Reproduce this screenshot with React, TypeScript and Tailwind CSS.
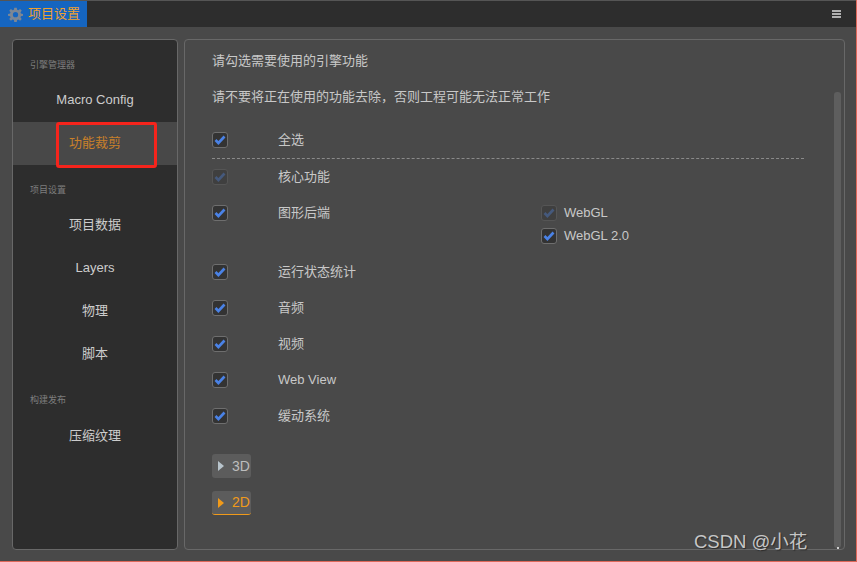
import React from "react";

const font = { fontFamily: '"Liberation Sans", "Noto Sans CJK SC", sans-serif' };

function Check({ dim = false }: { dim?: boolean }) {
  return (
    <span className={`flex h-[16px] w-[16px] shrink-0 items-center justify-center rounded-[3px] border ${dim ? "border-[#555555] bg-[#3f3f3f]" : "border-[#6e6e6e] bg-[#333333]"}`}>
      <svg width="12" height="10" viewBox="0 0 12 10" fill="none">
        <path d="M1.500 5 L4.400 8 L10.500 1.500" stroke={dim ? "#45597c" : "#4a82e6"} strokeWidth="2.600" />
      </svg>
    </span>
  );
}

function Row({ label, dim }: { label: string; dim?: boolean }) {
  return (
    <div className="flex h-[18px] items-center">
      <Check dim={dim} />
      <span className="ml-[50px] w-[263px] text-[13px] text-[#c8c8c8]">{label}</span>
    </div>
  );
}

function NavItem({ label, active }: { label: string; active?: boolean }) {
  return (
    <div className={`flex h-[43px] items-center justify-center text-[13px] ${active ? "bg-[#484848] pb-[2px] text-[#c9802a]" : "pt-[1px] text-[#cccccc]"}`}>
      {label}
    </div>
  );
}

function Head({ label }: { label: string }) {
  return <div className="flex h-[38px] items-end pb-[8px] pl-[17px] text-[9px] leading-[10px] text-[#7e7e7e]">{label}</div>;
}

function Fold({ label, on }: { label: string; on?: boolean }) {
  return (
    <div className={`flex h-[24px] w-[39px] items-center gap-[8px] rounded-[3px] bg-[#5c5c5c] pl-[6px] text-[14px] ${on ? "border-b border-[#f09a1a] text-[#f09a1a]" : "text-[#bdbdbd]"}`}>
      <svg width="6" height="10" viewBox="0 0 6 10" className="shrink-0"><path d="M0 0 L6 5 L0 10 Z" fill={on ? "#f09a1a" : "#b8c4cc"} /></svg>
      <span>{label}</span>
    </div>
  );
}

export default function App() {
  return (
    <div style={font} className="relative flex h-[562px] w-[857px] flex-col overflow-hidden border-r border-b border-[#e0685a] bg-[#494949]">
      <div className="flex h-[27px] shrink-0 items-center justify-between border-t border-[#555555] bg-[#2d2d2d] pr-[15px]">
        <div className="flex h-[26px] w-[87px] items-center gap-[5px] bg-[#1565c0] pl-[8px] text-[13px] text-[#f0a030]">
          <svg width="15" height="15" viewBox="0 0 24 24" fill="#7d8794">
            <path fillRule="evenodd" d="M10 1h4l.6 3.200 2 .9L19.400 3 22 6l-2 2.500.7 2L24 11v3l-3.300.6-.7 2 2 2.600L19.400 22l-2.800-2-2 .9L14 24h-4l-.6-3.100-2-.9-2.800 2L2 19.200l2-2.600-.7-2L0 14v-3l3.300-.5.7-2L2 6l2.600-3 2.800 2.100 2-.9zM12 8a4.200 4.200 0 1 0 0 8.400A4.200 4.200 0 0 0 12 8z" />
          </svg>
          <span>项目设置</span>
        </div>
        <div className="flex w-[9px] flex-col gap-[1px]">
          <span className="h-[2px] bg-[#b0b0b0]" />
          <span className="h-[2px] bg-[#b0b0b0]" />
          <span className="h-[2px] bg-[#b0b0b0]" />
        </div>
      </div>

      <div className="flex flex-1 gap-[6px] pl-[12px] pr-[11px] pt-[12px]">
        <div className="h-[511px] w-[166px] overflow-hidden rounded-[4px] border border-[#686868] bg-[#2d2d2d]">
          <Head label="引擎管理器" />
          <NavItem label="Macro Config" />
          <div className="h-px" />
          <NavItem label="功能裁剪" active />
          <Head label="项目设置" />
          <NavItem label="项目数据" />
          <NavItem label="Layers" />
          <NavItem label="物理" />
          <NavItem label="脚本" />
          <div className="h-[39px]"><Head label="构建发布" /></div>
          <NavItem label="压缩纹理" />
        </div>

        <div className="relative h-[511px] flex-1 rounded-[4px] border border-[#686868] pl-[27px]">
          <div className="flex h-[41px] items-center text-[13px] leading-[14px] text-[#c8c8c8]">请勾选需要使用的引擎功能</div>
          <div className="mt-[6px] flex h-[20px] items-center text-[13px] text-[#c8c8c8]">请不要将正在使用的功能去除，否则工程可能无法正常工作</div>
          <div className="mt-[24px]"><Row label="全选" /></div>
          <div className="mt-[9px] w-[592px] border-t border-dashed border-[#8a8a8a]" />
          <div className="mt-[9px]"><Row label="核心功能" dim /></div>
          <div className="mt-[19px] flex items-start">
            <Check />
            <span className="ml-[50px] w-[263px] text-[13px] leading-[16px] text-[#c8c8c8]">图形后端</span>
            <div className="flex flex-col gap-[7px]">
              <div className="flex items-center gap-[7px] text-[13px] leading-[16px] text-[#c8c8c8]"><Check dim />WebGL</div>
              <div className="flex items-center gap-[7px] text-[13px] leading-[16px] text-[#c8c8c8]"><Check />WebGL 2.0</div>
            </div>
          </div>
          <div className="mt-[19px] flex flex-col gap-[18px]">
            <Row label="运行状态统计" />
            <Row label="音频" />
            <Row label="视频" />
            <Row label="Web View" />
            <Row label="缓动系统" />
          </div>
          <div className="mt-[29px] flex flex-col gap-[13px]">
            <Fold label="3D" />
            <Fold label="2D" on />
          </div>
          <div className="absolute right-[3px] top-[52px] h-[456px] w-[7px] rounded-[3px] bg-[#5e5e5e]" />
          <div className="absolute right-[5px] bottom-[0px] h-[2px] w-[2px] bg-[#d0d0d0]" />
        </div>
      </div>

      <div className="absolute left-[56px] top-[122px] h-[46px] w-[101px] rounded-[3px] border-[3px] border-[#f5241c]" />
      <div className="absolute left-[694px] top-[529px] text-[18.500px] leading-[26px] text-[#c6c6c6] [text-shadow:1px_1px_1px_#2a2a2a]">CSDN @小花</div>
    </div>
  );
}
